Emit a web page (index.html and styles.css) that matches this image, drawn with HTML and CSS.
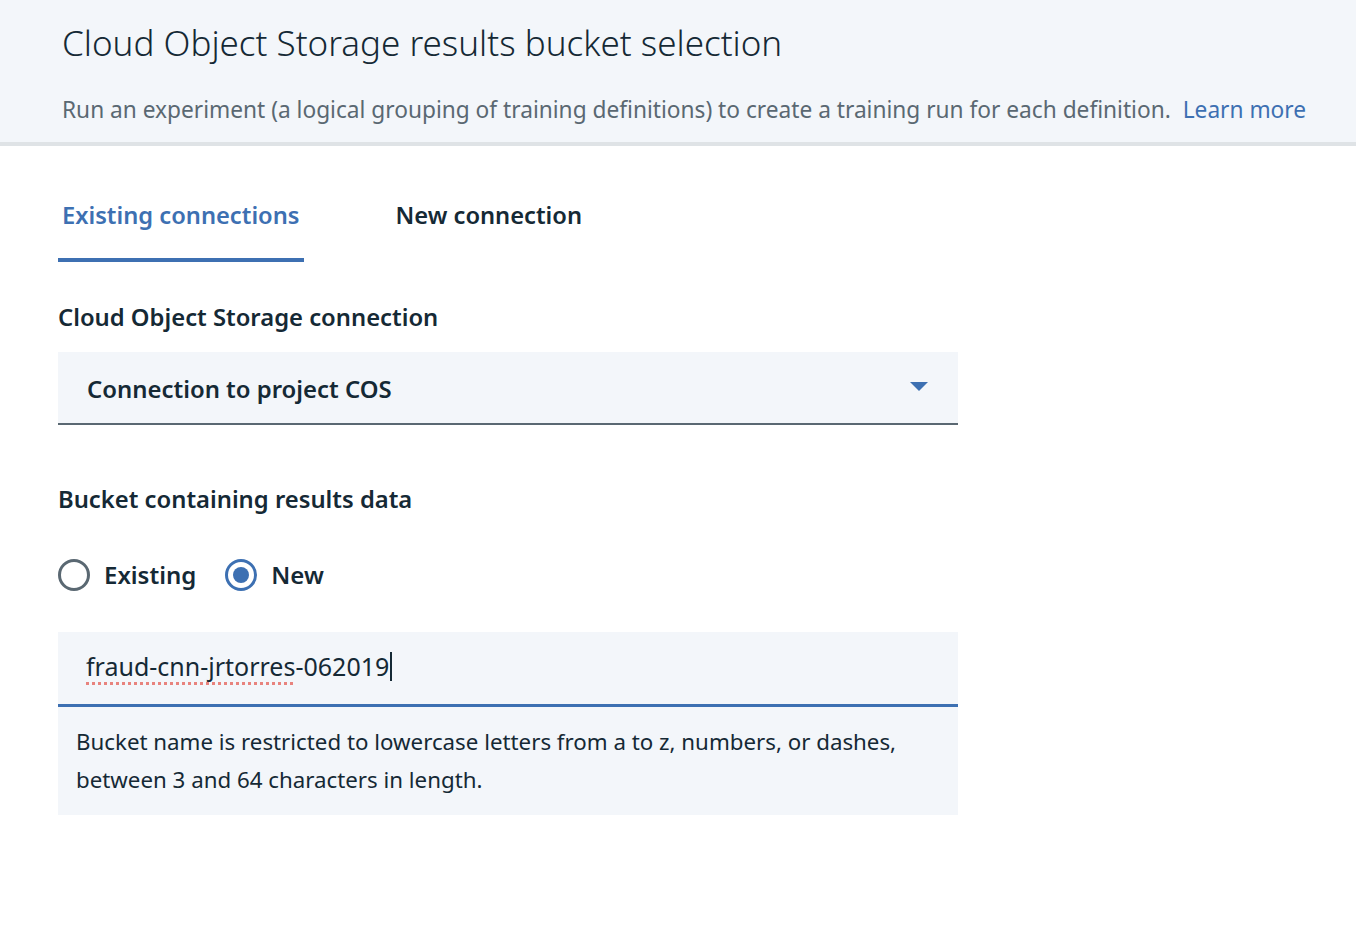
FILE: index.html
```html
<!DOCTYPE html>
<html>
<head>
<meta charset="utf-8">
<link rel="stylesheet" href="styles.css">
</head>
<body>
<header class="hdr">
  <h1 class="hdr-title">Cloud Object Storage results bucket selection</h1>
  <p class="hdr-desc">Run an experiment (a logical grouping of training definitions) to create a training run for each definition. <a class="link" href="#">Learn more</a></p>
</header>
<main class="content">
  <nav class="tabs">
    <div class="tab tab-active">Existing connections</div>
    <div class="tab">New connection</div>
  </nav>
  <section class="field">
    <div class="label">Cloud Object Storage connection</div>
    <div class="select">
      <span class="select-value">Connection to project COS</span>
      <svg class="caret" width="18" height="10" viewBox="0 0 18 10"><path d="M0 0 L18 0 L9 9 Z" fill="#3d70b2"/></svg>
    </div>
  </section>
  <section class="field field-bucket">
    <div class="label">Bucket containing results data</div>
    <div class="radios">
      <div class="radio"><span class="radio-dot"></span><span class="radio-label">Existing</span></div>
      <div class="radio radio-checked"><span class="radio-dot"></span><span class="radio-label">New</span></div>
    </div>
    <div class="input"><span class="input-text"><span class="misspelt">fraud-cnn-jrtorres</span>-062019</span><span class="cursor"></span></div>
    <div class="helper">Bucket name is restricted to lowercase letters from a to z, numbers, or dashes, between 3 and 64 characters in length.</div>
  </section>
</main>
</body>
</html>
```
FILE: styles.css
```css
* { box-sizing: border-box; }
body {
  margin: 0;
  font-family: "Noto Sans", "Open Sans", sans-serif;
  color: #152935;
  background: #ffffff;
}
.hdr {
  background: #f3f6fa;
  border-bottom: 4px solid #dfe3e6;
  padding: 20px 0 0 62px;
  height: 146px;
}
.hdr-title {
  margin: 0;
  font-size: 35px;
  font-weight: 300;
  line-height: 46px;
  color: #152935;
}
.hdr-desc {
  margin: 28px 0 0;
  font-size: 22.7px;
  line-height: 32px;
  color: #5a6872;
}
.link { color: #3d70b2; text-decoration: none; margin-left: 6px; }
.content {
  padding: 0 0 0 58px;
  width: 958px;
}
.tabs {
  display: flex;
  align-items: flex-start;
  gap: 88px;
  margin-top: 46px;
}
.tab {
  font-size: 23.7px;
  font-weight: 600;
  line-height: 32px;
  padding: 7px 4px 31px 4px;
  color: #152935;
}
.tab-active {
  color: #3d70b2;
  border-bottom: 4px solid #3d70b2;
  padding-bottom: 27px;
}
.field { margin-top: 39px; }
.label {
  font-size: 23.8px;
  font-weight: 600;
  line-height: 32px;
  color: #152935;
}
.select {
  margin-top: 19px;
  height: 73px;
  background: #f3f6fa;
  border-bottom: 2px solid #5a6872;
  display: flex;
  align-items: center;
  justify-content: space-between;
  padding: 2px 30px 0 29px;
}
.select-value { font-size: 23.9px; font-weight: 600; }
.caret { margin-top: -3px; }
.field-bucket { margin-top: 58px; }
.radios {
  display: flex;
  gap: 29px;
  margin-top: 44px;
}
.radio { display: flex; align-items: center; gap: 14px; }
.radio-dot {
  width: 32px; height: 32px;
  border-radius: 50%;
  border: 3px solid #5a6872;
  display: flex; align-items: center; justify-content: center;
}
.radio-checked .radio-dot { border-color: #3d70b2; }
.radio-checked .radio-dot::after {
  content: "";
  width: 16px; height: 16px; border-radius: 50%;
  background: #3d70b2;
}
.radio-label { font-size: 24px; font-weight: 600; line-height: 32px; }
.input {
  margin-top: 41px;
  height: 75px;
  background: #f3f6fa;
  border-bottom: 3px solid #3d70b2;
  display: flex;
  align-items: center;
  padding: 0 0 4px 28px;
}
.input-text { font-size: 25px; line-height: 30px; }
.misspelt {
  text-decoration: underline dotted #e8837d;
  text-decoration-thickness: 3px;
  text-underline-offset: 6px;
}
.cursor { width: 2px; height: 29px; background: #152935; margin-left: 1px; }
.helper {
  background: #f3f6fa;
  padding: 16px 40px 16px 18px;
  font-size: 22.3px;
  line-height: 38px;
  color: #152935;
}
```
